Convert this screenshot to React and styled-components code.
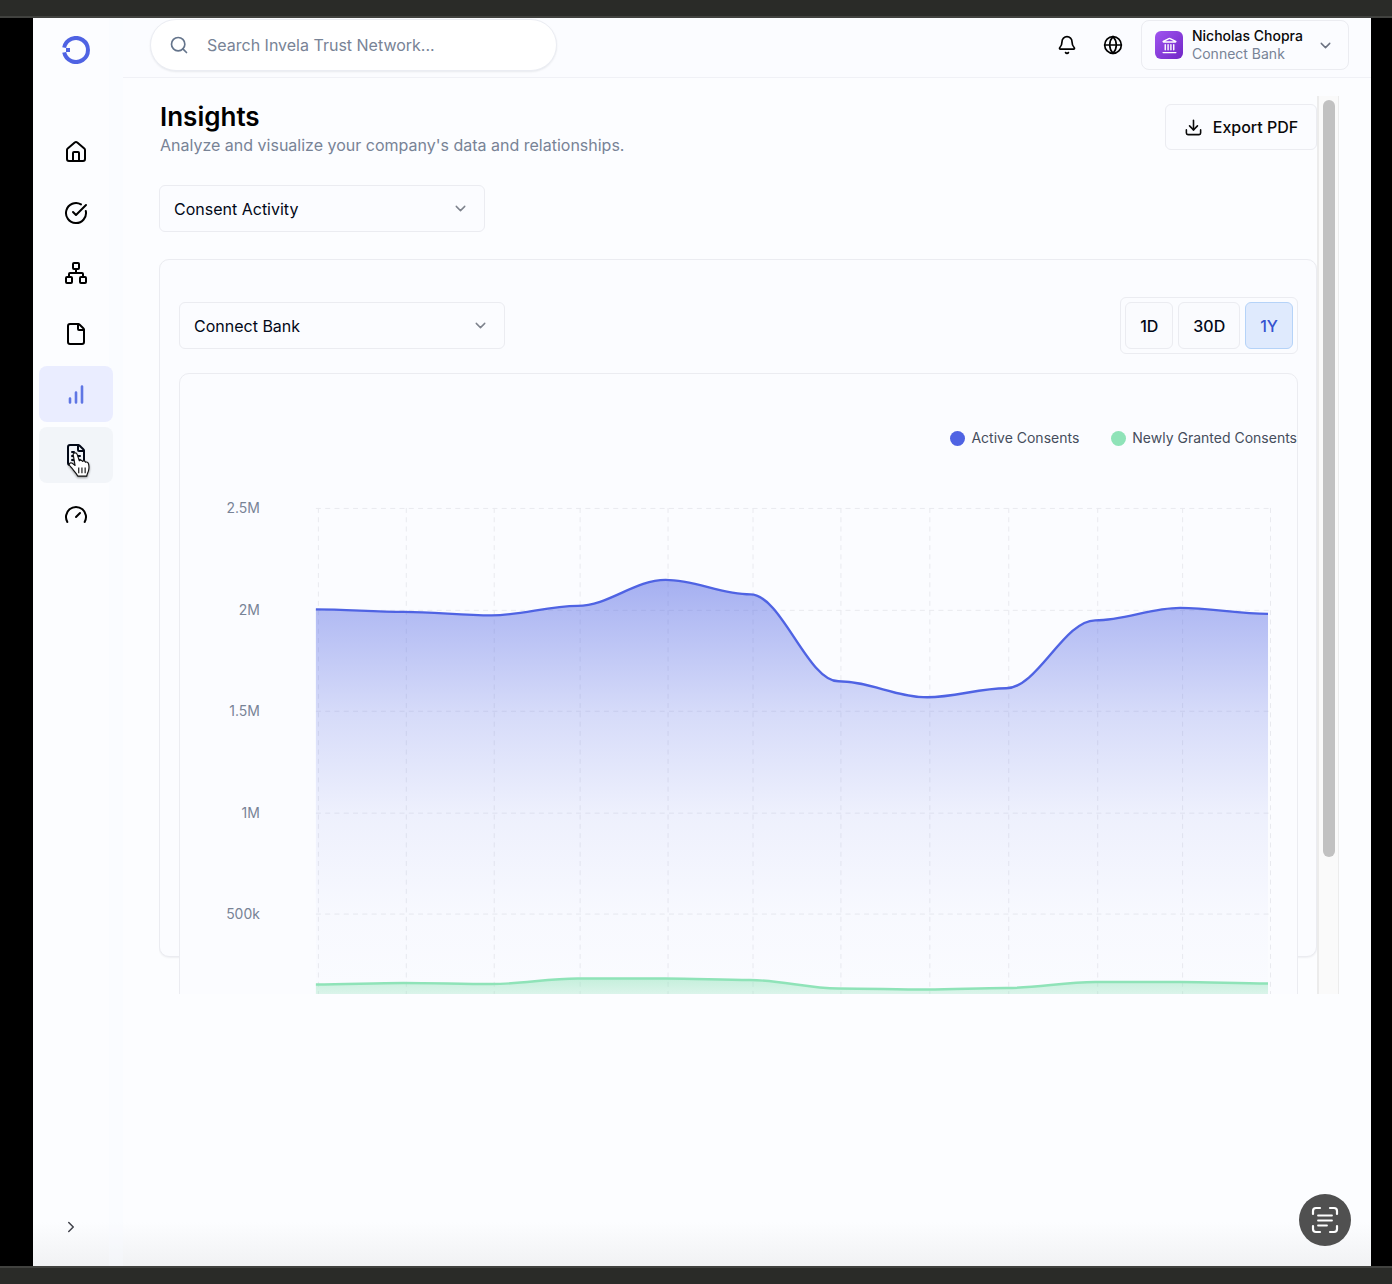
import React, { useId, useState } from "react";
import styled, { createGlobalStyle, css } from "styled-components";
import {
  Bell,
  ChevronDown,
  ChevronRight,
  CircleCheckBig,
  Download,
  File,
  FileText,
  Gauge,
  Globe,
  House,
  Landmark,
  Network,
  Search,
} from "lucide-react";

const c = {
  ink: "#020817",
  black: "#0a0a0a",
  muted: "#788396",
  line: "#ebecf1",
  page: "#fcfdff",
  panel: "#fbfcff",
  brand: "#4f63e3",
  green: "#8fe3b8",
};

const Global = createGlobalStyle`
  *, *::before, *::after { box-sizing: border-box; }
  body { margin: 0; background: #000; }
  body, button, input, select {
    font-family: Inter, "Liberation Sans", sans-serif;
    font-size: 16px;
    color: ${c.ink};
  }
`;

const Screen = styled.div`
  display: flex;
  flex-direction: column;
  height: 100vh;
  overflow: hidden;
  background: #000;
`;

const Edge = styled.div`
  flex: none;
  height: 18px;
  background: #2a2b28;
  border: 0 solid #41423f;
  border-width: ${(p) => (p.$bottom ? "2px 0 0" : "0 0 2px")};
`;

const Shell = styled.div`
  position: relative;
  flex: 1;
  min-height: 0;
  display: flex;
  margin: 0 21px 0 33px;
  background: linear-gradient(to top, #f1f2f4, ${c.page} 44px);
`;

const Sidebar = styled.aside`
  flex: none;
  width: 90px;
  display: flex;
  flex-direction: column;
  padding: 18px 0 30px 6px;
  border-right: 14px solid rgba(246, 248, 255, 0.35);
`;

const Logo = styled.a`
  display: flex;
  justify-content: center;
  width: 74px;
  height: 28px;
  margin-bottom: 60px;
`;

const Nav = styled.nav`
  display: flex;
  flex-direction: column;
  justify-content: space-between;
  width: 74px;
  height: 419px;
`;

const NavLink = styled.a`
  position: relative;
  display: flex;
  align-items: center;
  justify-content: center;
  height: 56px;
  border-radius: 8px;
  color: #000;
  ${(p) => p.$active && css`background: #eaedff; color: #5f76e4;`}
  ${(p) => p.$hover && css`background: #f2f5f9; color: ${c.ink};`}
`;

const Pointer = styled.svg`
  position: absolute;
  left: 27px;
  top: 25px;
  filter: drop-shadow(0 1px 1px rgba(0, 0, 0, 0.4));
`;

const Expand = styled.button`
  display: flex;
  align-self: flex-start;
  margin: auto 0 0 23px;
  padding: 0;
  border: 0;
  background: none;
  color: #3f414a;
`;

const Main = styled.div`
  flex: 1;
  min-width: 0;
  display: flex;
  flex-direction: column;
`;

const Header = styled.header`
  flex: none;
  display: flex;
  align-items: center;
  height: 60px;
  padding: 0 22px 5px 27px;
  border-bottom: 1px solid #f0f1f6;
  background: ${c.panel};
`;

const SearchBox = styled.label`
  display: flex;
  align-items: center;
  gap: 18px;
  width: 407px;
  height: 52px;
  padding: 0 18px;
  border: 1px solid #ebedf3;
  border-radius: 26px;
  background: #fff;
  box-shadow: 0 1px 2px rgba(15, 23, 42, 0.08);
  color: #64748b;
`;

const SearchInput = styled.input`
  flex: 1;
  min-width: 0;
  padding: 0;
  border: 0;
  outline: 0;
  background: none;
  &::placeholder { color: ${c.muted}; opacity: 1; }
`;

const HeaderTools = styled.div`
  display: flex;
  align-items: center;
  gap: 26px;
  margin-left: auto;
`;

const IconButton = styled.button`
  display: flex;
  padding: 0;
  border: 0;
  background: none;
  color: #000;
`;

const Account = styled.button`
  display: flex;
  align-items: center;
  gap: 9px;
  width: 208px;
  height: 50px;
  margin-left: -8px;
  padding: 0 14px 0 13px;
  border: 1px solid ${c.line};
  border-radius: 8px;
  background: none;
  text-align: left;
`;

const Avatar = styled.span`
  display: flex;
  align-items: center;
  justify-content: center;
  width: 28px;
  height: 28px;
  border-radius: 6px;
  background: linear-gradient(135deg, #a055f0, #7126c6);
  color: #fff;
`;

const Who = styled.span`
  flex: 1;
  display: flex;
  flex-direction: column;
  font-size: 14px;
  line-height: 18px;
  white-space: nowrap;
`;

const Name = styled.span`
  font-weight: 500;
  color: ${c.black};
`;

const Org = styled.span`
  color: ${c.muted};
`;

const Scroller = styled.div`
  flex: none;
  display: flex;
  height: calc(100vh - 386px);
  margin: 18px 32px 0 36px;
  overflow: hidden;
`;

const Content = styled.main`
  flex: 1;
  min-width: 0;
`;

const Track = styled.div`
  flex: none;
  width: 22px;
  padding: 4px 4px 0 4px;
  border: solid #ececec;
  border-width: 0 1px 0 2px;
  background: #fafafa;
`;

const Thumb = styled.div`
  width: 12px;
  height: 757px;
  border-radius: 6px;
  background: #c1c1c1;
`;

const PageHead = styled.div`
  display: flex;
  justify-content: space-between;
  align-items: flex-start;
  padding-top: 8px;
`;

const Title = styled.h1`
  margin: 0;
  padding-left: 1px;
  font-size: 26px;
  font-weight: 600;
  line-height: 26px;
  color: #000;
`;

const Subtitle = styled.p`
  margin: 3px 0 0;
  padding-left: 1px;
  line-height: 24px;
  color: ${c.muted};
`;

const ExportButton = styled.button`
  display: flex;
  align-items: center;
  justify-content: center;
  gap: 10px;
  width: 152px;
  height: 46px;
  padding: 0;
  border: 1px solid ${c.line};
  border-radius: 6px;
  background: ${c.panel};
  font-weight: 500;
  color: ${c.black};
`;

const SelectWrap = styled.label`
  display: grid;
  align-items: center;
  width: 326px;
  height: 47px;
  border: 1px solid ${c.line};
  border-radius: 6px;
  background: ${c.panel};
  color: #7d828c;

  & > * { grid-area: 1 / 1; }
  & > svg { justify-self: end; margin-right: 15px; pointer-events: none; }
`;

const Select = styled.select`
  width: 100%;
  height: 100%;
  padding: 0 14px;
  border: 0;
  outline: 0;
  background: none;
  appearance: none;
`;

const FilterRow = styled.div`
  margin: 28px 0 27px;
`;

const Card = styled.section`
  height: 698px;
  padding: 37px 18px 0 19px;
  border: 1px solid ${c.line};
  border-radius: 10px;
  background: ${c.panel};
  box-shadow: 0 1px 2px rgba(15, 23, 42, 0.06);
`;

const CardHead = styled.div`
  display: flex;
  justify-content: space-between;
  align-items: center;
  margin-bottom: 19px;
`;

const Ranges = styled.div`
  display: flex;
  gap: 5px;
  padding: 4px;
  border: 1px solid ${c.line};
  border-radius: 6px;
`;

const RangeButton = styled.button`
  height: 47px;
  padding: 0 14px;
  border: 1px solid ${(p) => (p.$on ? "#b5d3f8" : c.line)};
  border-radius: 6px;
  background: ${(p) => (p.$on ? "#dfeafd" : "#fafbfe")};
  font-weight: 500;
  color: ${(p) => (p.$on ? "#3553cf" : c.ink)};
`;

const ChartCard = styled.div`
  border: 1px solid ${c.line};
  border-radius: 10px;
  background: ${c.panel};
  padding: 54px 0 0;
`;

const Legend = styled.ul`
  display: flex;
  justify-content: flex-end;
  gap: 32px;
  margin: 0;
  padding: 0;
  list-style: none;
  font-size: 14px;
  line-height: 20px;
  color: #454d5c;
`;

const LegendItem = styled.li`
  display: flex;
  align-items: center;
  gap: 6px;
  &::before {
    content: "";
    width: 15px;
    height: 15px;
    border-radius: 50%;
    background: ${(p) => p.$tone};
  }
`;

const Plot = styled.svg`
  display: block;
  width: 100%;
  height: auto;
`;

const AxisText = styled.text`
  font-size: 14px;
  fill: ${c.muted};
  text-anchor: end;
`;

const ScanButton = styled.button`
  position: absolute;
  right: 20px;
  bottom: 20px;
  display: flex;
  align-items: center;
  justify-content: center;
  width: 52px;
  height: 52px;
  padding: 0;
  border: 0;
  border-radius: 50%;
  background: #505050;
  color: #fff;
`;

function BarsIcon() {
  return (
    <svg width="24" height="24" viewBox="0 0 24 24" fill="none" stroke="currentColor" strokeWidth="2.6" strokeLinecap="round">
      <path d="M6 20.500v-4M12 20.500v-10M18 20.500v-16" />
    </svg>
  );
}

function LogoMark() {
  return (
    <svg width="28" height="28" viewBox="0 0 28 28" fill="none">
      <path d="M2.2 11.6A12 12 0 1 1 2.2 16.4" stroke={c.brand} strokeWidth="4" />
      <path d="M4 12h4v4H4z" fill={c.brand} />
    </svg>
  );
}

function HandPointer() {
  return (
    <Pointer width="28" height="32" viewBox="0 0 24 28" aria-hidden="true">
      <path
        d="M6.2 3.2c-.5-1.3.2-2.2 1.2-2.4 1-.2 1.800.4 2.200 1.500l1.800 5.400c.4-.8 2.100-.9 2.700.5.700-.8 2.200-.6 2.700.8.900-.6 2.300-.2 2.700 1.500.4 1.600.6 3.600-.1 6-.4 1.500-1.300 2.600-1.500 4.600H10c-1-2.600-3-4-4.500-6.200-.9-1.300-2-2.200-2.700-3.300-.7-1.200.5-2.400 1.900-1.900.9.300 1.800 1.200 3 2.100z"
        fill="#fff"
        stroke="#111"
        strokeWidth="1"
        strokeLinejoin="round"
      />
      <path d="M10.900 13.500v5M13.700 13.500v5M16.500 13.500v5" stroke="#111" strokeWidth="1" />
    </Pointer>
  );
}

function ScanTextIcon() {
  return (
    <svg width="28" height="28" viewBox="0 0 28 28" fill="none" stroke="currentColor" strokeLinecap="round">
      <path
        strokeWidth="2.2"
        d="M2 8V5a3 3 0 0 1 3-3h4M19 2h4a3 3 0 0 1 3 3v3M26 20v3a3 3 0 0 1-3 3h-4M9 26H5a3 3 0 0 1-3-3v-3"
      />
      <path strokeWidth="1.800" d="M7 9.500h14M7 14.500h14M7 19.500h9" />
    </svg>
  );
}

const nav = [
  { label: "Dashboard", icon: <House size={24} /> },
  { label: "Tasks", icon: <CircleCheckBig size={24} /> },
  { label: "Network", icon: <Network size={24} /> },
  { label: "Files", icon: <File size={24} /> },
  { label: "Insights", icon: <BarsIcon />, active: true },
  { label: "Reports", icon: <FileText size={24} />, hover: true },
  { label: "Benchmarks", icon: <Gauge size={24} /> },
];

const columns = [138, 226, 314, 400, 488, 573, 661, 750, 829, 918, 1003, 1091];
const rows = [
  ["2.5M", 60],
  ["2M", 162],
  ["1.5M", 263],
  ["1M", 365],
  ["500k", 466],
];
const active = [161.5, 164, 167.5, 158, 132, 146.5, 233.5, 249.5, 240.5, 172.5, 160, 166];
const granted = [537, 535.5, 536.5, 531, 531, 532.5, 541, 542, 540.5, 534.5, 534.5, 536];
const floor = 568;

/* Joins the points with S-curves that leave and arrive level. */
function smooth(ys) {
  const xs = columns.map((x) => x - 2);
  return ys.reduce((d, y, i) => {
    if (i === 0) return `M${xs[0]},${y}`;
    const reach = (xs[i] - xs[i - 1]) * 0.35;
    return `${d}C${xs[i - 1] + reach},${ys[i - 1]} ${xs[i] - reach},${y} ${xs[i]},${y}`;
  }, "");
}

function Series({ ys, tone, fill }) {
  const d = smooth(ys);
  return (
    <g>
      <path d={`${d}V${floor}H${columns[0] - 2}Z`} fill={fill} />
      <path d={d} fill="none" stroke={tone} strokeWidth="2.4" />
    </g>
  );
}

const fade = [
  [0, 0.5],
  [0.07, 0.43],
  [0.3, 0.22],
  [0.53, 0.08],
  [0.77, 0.02],
  [1, 0],
];

function ConsentChart() {
  const id = useId();
  return (
    <Plot viewBox="0 0 1118 640" role="img" aria-label="Consent activity over one year">
      <defs>
        <linearGradient id={`${id}a`} gradientUnits="userSpaceOnUse" x1="0" y1="132" x2="0" y2="568">
          {fade.map(([offset, opacity]) => (
            <stop key={offset} offset={offset} stopColor={c.brand} stopOpacity={opacity} />
          ))}
        </linearGradient>
        <linearGradient id={`${id}g`} gradientUnits="userSpaceOnUse" x1="0" y1="531" x2="0" y2="568">
          <stop offset="0" stopColor={c.green} stopOpacity="0.5" />
          <stop offset="1" stopColor={c.green} stopOpacity="0" />
        </linearGradient>
      </defs>
      <g stroke="#e9eaef" strokeDasharray="5 4.300">
        {rows.map(([label, y]) => (
          <path key={label} d={`M136 ${y + 0.5}H1092`} />
        ))}
        {columns.map((x) => (
          <path key={x} d={`M${x + 0.5} 60V${floor}`} />
        ))}
      </g>
      {rows.map(([label, y]) => (
        <AxisText key={label} x="80" y={y + 5}>{label}</AxisText>
      ))}
      <Series ys={active} tone={c.brand} fill={`url(#${id}a)`} />
      <Series ys={granted} tone={c.green} fill={`url(#${id}g)`} />
    </Plot>
  );
}

function Picker({ label, options }) {
  return (
    <SelectWrap>
      <Select aria-label={label} defaultValue={options[0]}>
        {options.map((o) => (
          <option key={o}>{o}</option>
        ))}
      </Select>
      <ChevronDown size={17} />
    </SelectWrap>
  );
}

export default function App() {
  const [range, setRange] = useState("1Y");
  return (
    <Screen>
      <Global />
      <Edge />
      <Shell>
        <Sidebar>
          <Logo href="#" aria-label="Invela"><LogoMark /></Logo>
          <Nav aria-label="Main">
            {nav.map((n) => (
              <NavLink key={n.label} href="#" aria-label={n.label} $active={n.active} $hover={n.hover}>
                {n.icon}
                {n.hover && <HandPointer />}
              </NavLink>
            ))}
          </Nav>
          <Expand type="button" aria-label="Expand sidebar"><ChevronRight size={18} /></Expand>
        </Sidebar>
        <Main>
          <Header>
            <SearchBox>
              <Search size={20} />
              <SearchInput type="search" aria-label="Search" placeholder="Search Invela Trust Network..." />
            </SearchBox>
            <HeaderTools>
              <IconButton type="button" aria-label="Notifications"><Bell size={20} /></IconButton>
              <IconButton type="button" aria-label="Language"><Globe size={20} /></IconButton>
              <Account type="button">
                <Avatar><Landmark size={17} /></Avatar>
                <Who>
                  <Name>Nicholas Chopra</Name>
                  <Org>Connect Bank</Org>
                </Who>
                <ChevronDown size={17} color="#6b7280" />
              </Account>
            </HeaderTools>
          </Header>
          <Scroller>
            <Content>
              <PageHead>
                <div>
                  <Title>Insights</Title>
                  <Subtitle>Analyze and visualize your company's data and relationships.</Subtitle>
                </div>
                <ExportButton type="button"><Download size={19} />Export PDF</ExportButton>
              </PageHead>
              <FilterRow>
                <Picker label="Visualization" options={["Consent Activity"]} />
              </FilterRow>
              <Card>
                <CardHead>
                  <Picker label="Company" options={["Connect Bank"]} />
                  <Ranges role="group" aria-label="Time range">
                    {["1D", "30D", "1Y"].map((r) => (
                      <RangeButton key={r} type="button" aria-pressed={r === range} $on={r === range} onClick={() => setRange(r)}>
                        {r}
                      </RangeButton>
                    ))}
                  </Ranges>
                </CardHead>
                <ChartCard>
                  <Legend>
                    <LegendItem $tone={c.brand}>Active Consents</LegendItem>
                    <LegendItem $tone={c.green}>Newly Granted Consents</LegendItem>
                  </Legend>
                  <ConsentChart />
                </ChartCard>
              </Card>
            </Content>
            <Track aria-hidden="true"><Thumb /></Track>
          </Scroller>
        </Main>
        <ScanButton type="button" aria-label="Scan text"><ScanTextIcon /></ScanButton>
      </Shell>
      <Edge $bottom />
    </Screen>
  );
}
